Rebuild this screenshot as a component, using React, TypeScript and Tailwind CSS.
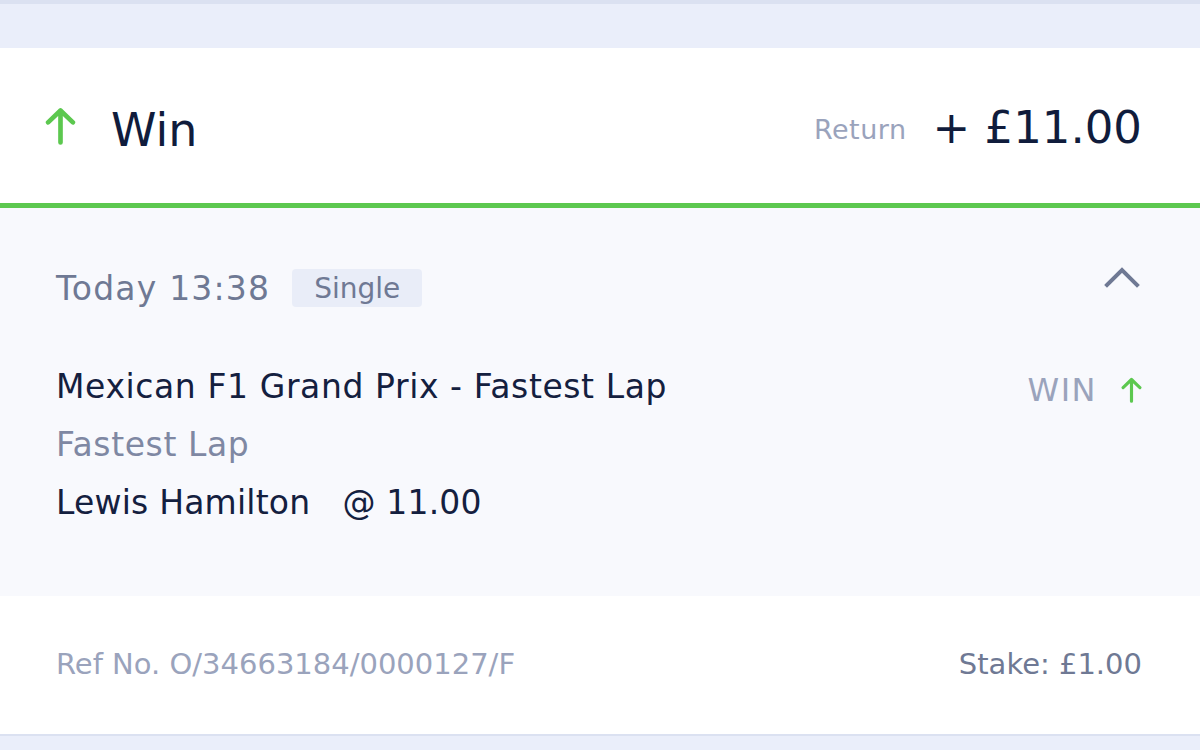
import React from 'react';

function UpArrow({ className }: { className?: string }) {
  return (
    <svg viewBox="0 0 30 36" className={className} fill="none">
      <path
        d="M15 34V3M3 14.5L15 3l12 11.5"
        stroke="#5cc84f"
        strokeWidth="4.5"
        strokeLinecap="round"
        strokeLinejoin="round"
      />
    </svg>
  );
}

function ChevronUp() {
  return (
    <svg viewBox="0 0 36 22" className="w-[36px] h-[22px]" fill="none">
      <path d="M3 19L18 4l15 15" stroke="#6f7994" strokeWidth="4" strokeLinecap="square" />
    </svg>
  );
}

export default function App() {
  return (
    <div
      className="w-[1200px] h-[750px] bg-white flex flex-col overflow-hidden"
      style={{ fontFamily: '"DejaVu Sans", Verdana, sans-serif' }}
    >
      {/* top band */}
      <div className="h-[48px] bg-[#eaeefa] border-t-[4px] border-[#dbe1f1] shrink-0" />

      {/* result header */}
      <div className="h-[160px] shrink-0 flex items-center justify-between pl-[45px] pr-[58px] border-b-[5px] border-[#5cc84f]">
        <div className="flex items-center gap-[35px]">
          <UpArrow className="w-[31px] h-[38px]" />
          <span className="text-[46px] text-[#101c3c] leading-none mt-[8px]">Win</span>
        </div>
        <div className="flex items-baseline gap-[26px] mt-[8px]">
          <span className="text-[27px] text-[#9aa3bc] tracking-[0.5px] relative bottom-[4px]">Return</span>
          <span className="text-[45px] text-[#101c3c] leading-none">+ £11.00</span>
        </div>
      </div>

      {/* bet detail */}
      <div className="h-[388px] shrink-0 bg-[#f8f9fd] pl-[56px] pr-[58px] pt-[61px]">
        <div className="flex items-center justify-between">
          <div className="flex items-center gap-[22px]">
            <span className="text-[33px] text-[#6f7994] leading-none tracking-[1.2px]">Today 13:38</span>
            <span className="bg-[#e9edf8] rounded-[4px] px-[22px] h-[38px] flex items-center text-[28px] text-[#6f7994] pt-[2px]">
              Single
            </span>
          </div>
          <div className="-mt-[22px] mr-[2px]">
            <ChevronUp />
          </div>
        </div>

        <div className="flex justify-between mt-[61px]">
          <div className="flex flex-col gap-[21px]">
            <span className="text-[33px] text-[#14203f] leading-[37px] tracking-[0.6px]">Mexican F1 Grand Prix - Fastest Lap</span>
            <span className="text-[33px] text-[#7f88a3] leading-[37px] tracking-[0.6px]">Fastest Lap</span>
            <span className="text-[33px] text-[#14203f] leading-[37px] tracking-[0.2px] whitespace-pre">Lewis Hamilton   @ 11.00</span>
          </div>
          <div className="flex items-center gap-[24px] h-[40px] mt-[2px]">
            <span className="text-[32px] text-[#9aa3bc] leading-none tracking-[1.5px]">WIN</span>
            <UpArrow className="w-[21px] h-[26px]" />
          </div>
        </div>
      </div>

      {/* footer */}
      <div className="h-[138px] shrink-0 flex items-center justify-between pl-[56px] pr-[58px]">
        <span className="text-[29px] text-[#9aa3bc]">Ref No. O/34663184/0000127/F</span>
        <span className="text-[29px] text-[#6f7994]">Stake: £1.00</span>
      </div>

      {/* bottom band */}
      <div className="flex-1 bg-[#eaeefa] border-t-[2px] border-[#dbe1f1]" />
    </div>
  );
}
